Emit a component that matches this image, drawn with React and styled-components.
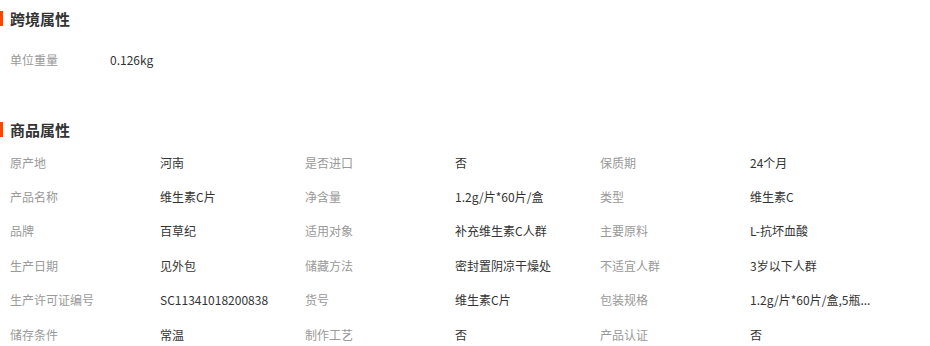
import React from "react";
import styled, { createGlobalStyle } from "styled-components";

const Global = createGlobalStyle`
  html, body { margin: 0; padding: 0; background: #fff; }
  body {
    font-family: "Noto Sans CJK SC", "Microsoft YaHei", "Liberation Sans", sans-serif;
    font-size: 12px;
    color: #333;
  }
`;

const Page = styled.div`
  width: 930px;
  padding-top: 3px;
`;

const Section = styled.section`
  margin-top: ${(p) => p.$top || 0}px;
`;

const Title = styled.h3`
  margin: 0;
  height: 30px;
  display: flex;
  align-items: center;
  gap: 7px;
  font-size: 15px;
  font-weight: bold;
  color: #333;
  &::before {
    content: "";
    width: 3px;
    height: 15px;
    background: #ff4400;
  }
`;

const Grid = styled.div`
  display: grid;
  grid-template-columns: ${(p) => p.$cols};
  grid-auto-rows: 34.4px;
  padding-top: ${(p) => p.$pad || 0}px;
  padding-left: 10px;
`;

const Label = styled.div`
  display: flex;
  align-items: center;
  color: #999;
  white-space: nowrap;
`;

const Value = styled.div`
  display: flex;
  align-items: center;
  color: #333;
  white-space: nowrap;
  overflow: hidden;
  padding-right: 14px;
`;

const cross = [["单位重量", "0.126kg"]];

const goods = [
  ["原产地", "河南"],
  ["是否进口", "否"],
  ["保质期", "24个月"],
  ["产品名称", "维生素C片"],
  ["净含量", "1.2g/片*60片/盒"],
  ["类型", "维生素C"],
  ["品牌", "百草纪"],
  ["适用对象", "补充维生素C人群"],
  ["主要原料", "L-抗坏血酸"],
  ["生产日期", "见外包"],
  ["储藏方法", "密封置阴凉干燥处"],
  ["不适宜人群", "3岁以下人群"],
  ["生产许可证编号", "SC11341018200838"],
  ["货号", "维生素C片"],
  ["包装规格", "1.2g/片*60片/盒,5瓶..."],
  ["储存条件", "常温"],
  ["制作工艺", "否"],
  ["产品认证", "否"],
];

export default function App() {
  return (
    <Page>
      <Global />
      <Section>
        <Title>跨境属性</Title>
        <Grid $cols="100px 200px" $pad={9.8}>
          {cross.map(([k, v]) => (
            <React.Fragment key={k}>
              <Label>{k}</Label>
              <Value>{v}</Value>
            </React.Fragment>
          ))}
        </Grid>
      </Section>
      <Section $top={37.8}>
        <Title>商品属性</Title>
        <Grid $cols="150px 145px 150px 145px 150px 145px">
          {goods.map(([k, v]) => (
            <React.Fragment key={k}>
              <Label>{k}</Label>
              <Value>{v}</Value>
            </React.Fragment>
          ))}
        </Grid>
      </Section>
    </Page>
  );
}
